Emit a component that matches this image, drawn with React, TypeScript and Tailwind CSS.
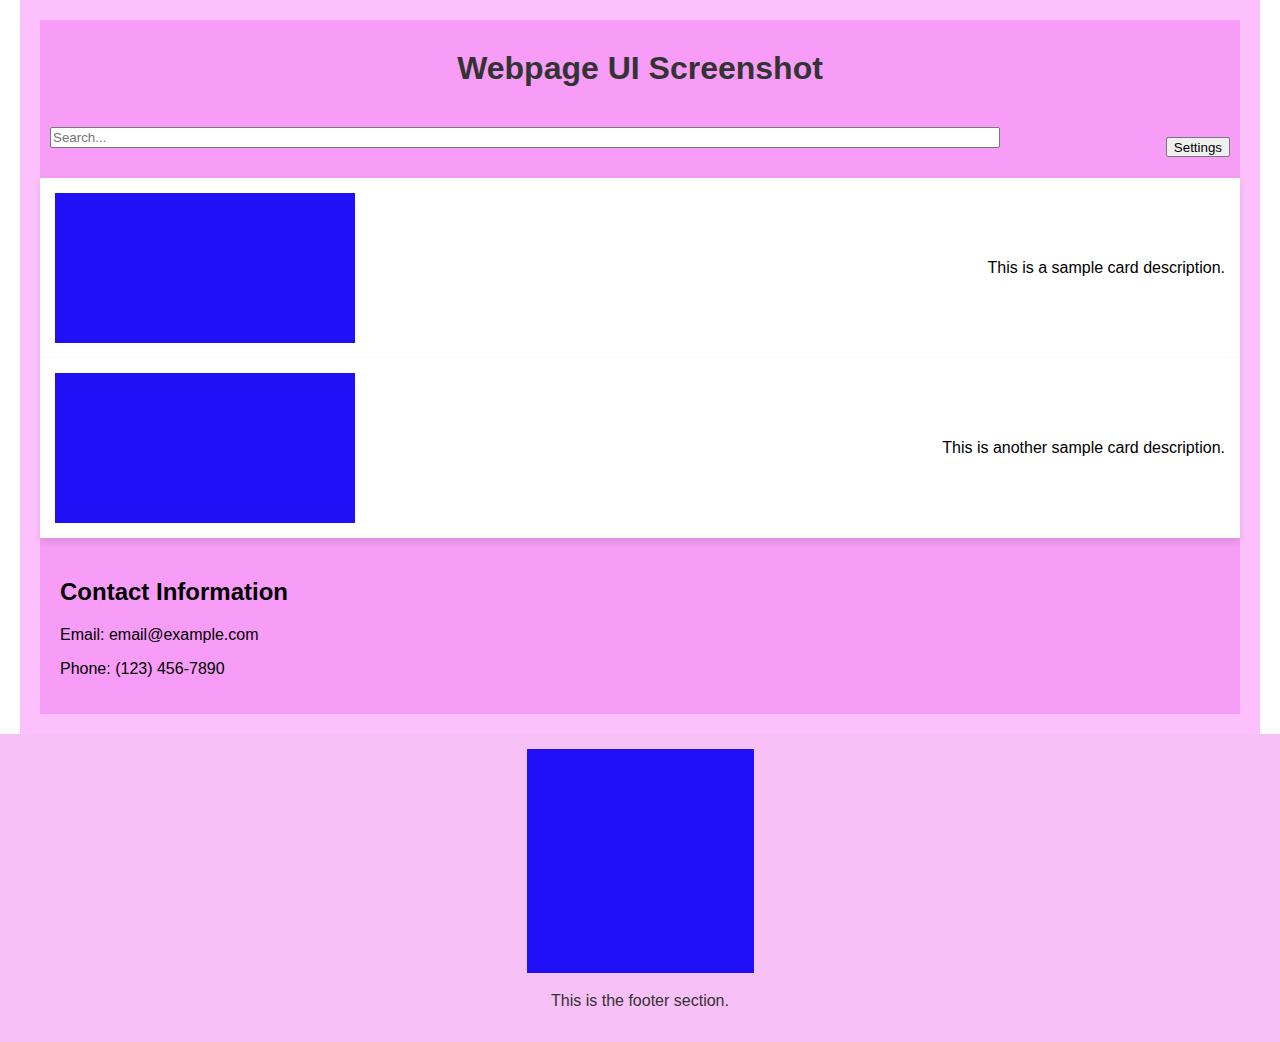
import React from 'react';

const cards = [
  { text: 'This is a sample card description.' },
  { text: 'This is another sample card description.' },
];

const App = () => {
  return (
    <div className="min-h-[1042px] bg-white font-['Liberation_Sans',Arial,sans-serif]">
      {/* Main container */}
      <div className="mx-auto w-[1240px] bg-[#fcc1fc] p-5">
        {/* Header */}
        <header className="bg-[#f79cf7] px-[10px]">
          <h1 className="pt-[30px] pb-[21px] text-center text-[32px] font-bold leading-[37px] text-[#333333]">
            Webpage UI Screenshot
          </h1>
          <div className="flex h-[70px] items-start justify-between">
            <input
              type="text"
              placeholder="Search..."
              className="mt-[19px] h-[21px] w-[950px] rounded-[2px] border border-[#767676] bg-white px-[2px] text-[13.33px] leading-[15px] text-black placeholder:text-[#757575]"
            />
            <button className="mt-[29px] h-[20px] rounded-[2px] border border-[#767676] bg-[#efefef] px-[7px] text-[13.33px] leading-[15px] text-black">
              Settings
            </button>
          </div>
        </header>

        {/* Cards */}
        {cards.map((card, index) => (
          <div
            key={index}
            className="relative flex items-center justify-between bg-white p-[15px] shadow-[0_4px_8px_rgba(0,0,0,0.1)]"
          >
            <div className="h-[150px] w-[300px] bg-[#1f10f6]" />
            <p className="text-base leading-[18px] text-black">{card.text}</p>
          </div>
        ))}

        {/* Contact */}
        <section className="bg-[#f79cf7] px-5 pt-5 pb-5">
          <h2 className="mt-[20px] mb-[20px] text-2xl font-bold leading-[28px] text-black">Contact Information</h2>
          <p className="mb-4 text-base leading-[18px] text-black">Email: email@example.com</p>
          <p className="mb-4 text-base leading-[18px] text-black">Phone: (123) 456-7890</p>
        </section>
      </div>

      {/* Footer */}
      <footer className="flex flex-col items-center bg-[#f7c0f7] pt-[15px] pb-[33px]">
        <div className="h-[224px] w-[227px] bg-[#1f10f6]" />
        <p className="mt-[19px] text-base leading-[18px] text-[#333333]">This is the footer section.</p>
      </footer>
    </div>
  );
};

export default App;
